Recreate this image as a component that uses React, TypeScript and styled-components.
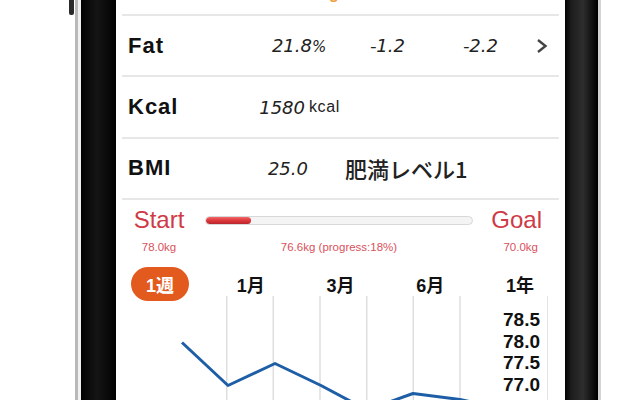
import styled, { createGlobalStyle } from "styled-components"

const GlobalStyle = createGlobalStyle`
  html, body {
    margin: 0;
    padding: 0;
    background: #fff;
    overflow: hidden;
  }
  body {
    font-family: "Liberation Sans", Arial, sans-serif;
  }
`

const RED = "#cf3a46"
const RED_LIGHT = "#d9525c"

const Page = styled.div`
  width: 640px;
  height: 400px;
  overflow: hidden;
  background: #fff;
  display: flex;
  padding-left: 75px;
  box-sizing: border-box;
`

const Rim = styled.div`
  position: relative;
  display: flex;
  height: 400px;
  border-left: 3px solid #b9b9b9;
  border-right: 3px solid #d4d4d4;
  padding-left: 3px;
  background: #f1f1f1;
`

const SideButton = styled.div`
  position: absolute;
  left: -9px;
  top: 0;
  width: 5px;
  height: 15px;
  background: #2a2a2a;
  border-radius: 0 0 2px 2px;
`

const Bezel = styled.div`
  display: flex;
  padding: 0 33px 0 35px;
  background: linear-gradient(
    90deg,
    #020202 0px,
    #151515 16px,
    #020202 34px,
    #020202 484px,
    #1c1c1c 490px,
    #2e2e2e 502px,
    #080808 514px,
    #000 517px
  );
`

const Screen = styled.div`
  width: 449px;
  height: 400px;
  background: #fff;
  display: flex;
  flex-direction: column;
  overflow: hidden;
`

const TopRow = styled.div`
  height: 14px;
  margin: 0 6px;
  padding-left: 198px;
  border-bottom: 2px solid #e7e7e7;
  overflow: hidden;
  display: flex;
`

const TopValue = styled.span`
  margin-top: -14px;
  line-height: 16px;
  font-size: 16px;
  font-weight: 700;
  color: #f0a040;
`

const Row = styled.div`
  height: 59.5px;
  margin: 0 6px;
  padding: 0 11px 0 6px;
  display: flex;
  align-items: center;
  border-bottom: 2px solid #e7e7e7;
`

const Label = styled.span`
  width: 127px;
  flex-shrink: 0;
  font-size: 22px;
  font-weight: 700;
  letter-spacing: 1px;
  color: #111;
`

const Num = styled.span<{ $w?: number }>`
  width: ${(p) => p.$w ?? 53}px;
  flex-shrink: 0;
  text-align: right;
  font-family: "DejaVu Sans", sans-serif;
  font-style: italic;
  font-size: 18px;
  color: #222;
`

const Percent = styled.span`
  width: 22px;
  flex-shrink: 0;
  font-family: "DejaVu Sans", sans-serif;
  font-style: italic;
  font-size: 15px;
  color: #222;
  padding-top: 2px;
`

const Unit = styled.span`
  margin-left: 4px;
  font-size: 16px;
  letter-spacing: 0.6px;
  color: #222;
`

const Level = styled.span`
  margin-left: 37px;
  font-family: "Noto Sans CJK JP", sans-serif;
  font-size: 22px;
  font-weight: 500;
  color: #222;
`

const Chevron = styled.svg`
  margin-left: auto;
  width: 12px;
  height: 16px;
`

const Progress = styled.div`
  height: 67px;
  margin: 0 6px;
  padding: 6px 17px 0 11px;
  box-sizing: border-box;
  display: flex;
  align-items: flex-start;
`

const End = styled.div<{ $right?: boolean }>`
  width: ${(p) => (p.$right ? 50 : 52)}px;
  flex-shrink: 0;
  display: flex;
  flex-direction: column;
  align-items: ${(p) => (p.$right ? "flex-end" : "center")};
`

const EndTitle = styled.span`
  font-size: 24px;
  line-height: 28px;
  color: ${RED};
`

const SmallRed = styled.span<{ $pad?: number }>`
  margin-top: 6px;
  padding-right: ${(p) => p.$pad ?? 0}px;
  font-size: 11.5px;
  line-height: 14px;
  color: ${RED_LIGHT};
`

const BarColumn = styled.div`
  flex: 1;
  margin: 0 19px 0 20px;
  display: flex;
  flex-direction: column;
  align-items: center;
`

const Track = styled.div`
  width: 100%;
  height: 9px;
  margin-top: 10px;
  box-sizing: border-box;
  border: 1px solid #d8d8d8;
  border-radius: 5px;
  background: #f4f4f4;
  overflow: hidden;
`

const Fill = styled.div`
  height: 100%;
  border-radius: 4px;
  background: linear-gradient(180deg, #f06a6a 0%, #e03a3e 45%, #b8262c 100%);
`

const BarCaption = styled(SmallRed)`
  margin-top: 15px;
`

const Tabs = styled.div`
  height: 29px;
  display: grid;
  grid-template-columns: repeat(5, 1fr);
`

const Tab = styled.div<{ $active?: boolean }>`
  justify-self: center;
  align-self: start;
  width: ${(p) => (p.$active ? "58px" : "auto")};
  height: 34px;
  margin-left: ${(p) => (p.$active ? "-2px" : "0")};
  border-radius: 17px;
  background: ${(p) => (p.$active ? "#e35a1f" : "transparent")};
  color: ${(p) => (p.$active ? "#fff" : "#111")};
  display: flex;
  align-items: center;
  justify-content: center;
  font-family: "Liberation Sans", "Noto Sans CJK JP", sans-serif;
  font-size: 18px;
  font-weight: 700;
  position: relative;
  z-index: 1;
`

const Chart = styled.div`
  display: flex;
  height: 104px;
`

const Plot = styled.svg`
  width: 374px;
  height: 104px;
  flex-shrink: 0;
`

const Axis = styled.div`
  width: 58px;
  padding: 13px 7px 0 0;
  box-sizing: border-box;
  border-right: 1.5px solid #e4e4e4;
  display: flex;
  flex-direction: column;
  align-items: flex-end;
`

const AxisLabel = styled.span`
  font-size: 19px;
  font-weight: 700;
  line-height: 21.6px;
  color: #111;
`

const tabs = ["1週", "1月", "3月", "6月", "1年"]
const gridX = [110.7, 157.3, 204, 250.7, 297.3, 344]
const points = [
  [66, 46.5],
  [112, 89.5],
  [159, 67.5],
  [205, 89.5],
  [251, 114],
  [297, 97.5],
  [344, 103.5],
  [374, 110],
]
const axis = ["78.5", "78.0", "77.5", "77.0"]

export default function App() {
  const progress = 17
  return (
    <Page>
      <GlobalStyle />
      <Rim>
        <SideButton />
        <Bezel>
          <Screen>
            <TopRow>
              <TopValue>kg</TopValue>
            </TopRow>

            <Row>
              <Label>Fat</Label>
              <Num $w={57}>21.8</Num>
              <Percent>%</Percent>
              <Num $w={71}>-1.2</Num>
              <Num $w={93}>-2.2</Num>
              <Chevron viewBox="0 0 12 16">
                <polyline points="2,2 9.5,8 2,14" fill="none" stroke="#444" strokeWidth="2.4" />
              </Chevron>
            </Row>

            <Row>
              <Label>Kcal</Label>
              <Num $w={50}>1580</Num>
              <Unit>kcal</Unit>
            </Row>

            <Row>
              <Label>BMI</Label>
              <Num>25.0</Num>
              <Level>肥満レベル1</Level>
            </Row>

            <Progress>
              <End>
                <EndTitle>Start</EndTitle>
                <SmallRed>78.0kg</SmallRed>
              </End>
              <BarColumn>
                <Track>
                  <Fill style={{ width: `${progress}%` }} />
                </Track>
                <BarCaption>76.6kg (progress:18%)</BarCaption>
              </BarColumn>
              <End $right>
                <EndTitle>Goal</EndTitle>
                <SmallRed $pad={4}>70.0kg</SmallRed>
              </End>
            </Progress>

            <Tabs>
              {tabs.map((t, i) => (
                <Tab key={t} $active={i === 0}>
                  {t}
                </Tab>
              ))}
            </Tabs>

            <Chart>
              <Plot viewBox="0 0 374 104">
                {gridX.map((x) => (
                  <line key={x} x1={x} y1={0} x2={x} y2={104} stroke="#dedede" strokeWidth="1.5" />
                ))}
                <polyline
                  points={points.map((p) => p.join(",")).join(" ")}
                  fill="none"
                  stroke="#1d5ea6"
                  strokeWidth="3"
                  strokeLinejoin="round"
                />
              </Plot>
              <Axis>
                {axis.map((a) => (
                  <AxisLabel key={a}>{a}</AxisLabel>
                ))}
              </Axis>
            </Chart>
          </Screen>
        </Bezel>
      </Rim>
    </Page>
  )
}
